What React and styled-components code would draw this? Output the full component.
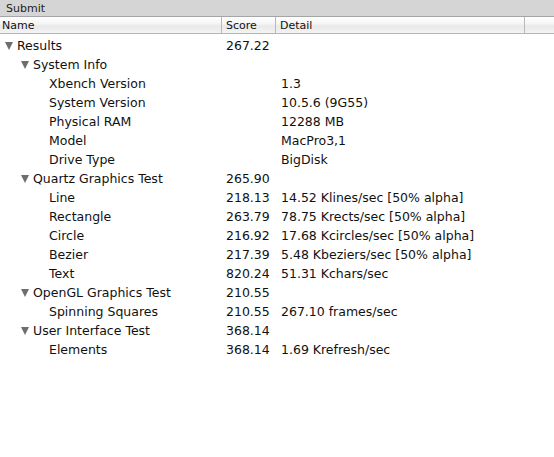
import styled, { createGlobalStyle } from "styled-components";

const GlobalStyle = createGlobalStyle`
    html, body {
        margin: 0;
        padding: 0;
        background: #fff;
    }
    body {
        font-family: "DejaVu Sans", "Liberation Sans", sans-serif;
    }
`

const Window = styled.div`
    width: 554px;
    height: 457px;
    background: #fff;
    overflow: hidden;
`

const TopBar = styled.div`
    height: 16px;
    background: #d5d5d5;
    border-bottom: 1px solid #a5a5a5;
    font-size: 11px;
    color: #222;
    padding-left: 6px;
    display: flex;
    align-items: center;
`

const HeaderRow = styled.div`
    display: grid;
    grid-template-columns: 222px 54px 249px 1fr;
    height: 16px;
    background: linear-gradient(#ffffff 0%, #f4f4f4 45%, #e9e9e9 55%, #f3f3f3 100%);
    border-bottom: 1px solid #b4b4b4;
`

const HeaderCell = styled.div`
    font-size: 11px;
    color: #111;
    padding-left: ${({ pad }) => pad}px;
    display: flex;
    align-items: center;
    border-right: ${({ last }) => (last ? "none" : "1px solid #b9b9b9")};
`

const Body = styled.div`
    padding-top: 2px;
`

const Row = styled.div`
    display: grid;
    grid-template-columns: 222px 54px 1fr;
    height: 19px;
    align-items: center;
    font-size: 12.5px;
    color: #111;
`

const NameCell = styled.div`
    display: flex;
    align-items: center;
    padding-left: ${({ level, open }) => (open ? 5 + level * 16 : 17 + level * 16)}px;
    white-space: nowrap;
`

const Triangle = styled.span`
    width: 0;
    height: 0;
    border-left: 4px solid transparent;
    border-right: 4px solid transparent;
    border-top: 8px solid #6e6e6e;
    margin-right: 4px;
    margin-top: 1px;
`

const ScoreCell = styled.div`
    padding-left: 4px;
`

const DetailCell = styled.div`
    padding-left: 5px;
    white-space: nowrap;
`

const rows = [
    { name: "Results", level: 0, open: true, score: "267.22" },
    { name: "System Info", level: 1, open: true },
    { name: "Xbench Version", level: 2, detail: "1.3" },
    { name: "System Version", level: 2, detail: "10.5.6 (9G55)" },
    { name: "Physical RAM", level: 2, detail: "12288 MB" },
    { name: "Model", level: 2, detail: "MacPro3,1" },
    { name: "Drive Type", level: 2, detail: "BigDisk" },
    { name: "Quartz Graphics Test", level: 1, open: true, score: "265.90" },
    { name: "Line", level: 2, score: "218.13", detail: "14.52 Klines/sec [50% alpha]" },
    { name: "Rectangle", level: 2, score: "263.79", detail: "78.75 Krects/sec [50% alpha]" },
    { name: "Circle", level: 2, score: "216.92", detail: "17.68 Kcircles/sec [50% alpha]" },
    { name: "Bezier", level: 2, score: "217.39", detail: "5.48 Kbeziers/sec [50% alpha]" },
    { name: "Text", level: 2, score: "820.24", detail: "51.31 Kchars/sec" },
    { name: "OpenGL Graphics Test", level: 1, open: true, score: "210.55" },
    { name: "Spinning Squares", level: 2, score: "210.55", detail: "267.10 frames/sec" },
    { name: "User Interface Test", level: 1, open: true, score: "368.14" },
    { name: "Elements", level: 2, score: "368.14", detail: "1.69 Krefresh/sec" },
]

export default function App() {
    return (
        <Window>
            <GlobalStyle />
            <TopBar>Submit</TopBar>
            <HeaderRow>
                <HeaderCell pad={2}>Name</HeaderCell>
                <HeaderCell pad={4}>Score</HeaderCell>
                <HeaderCell pad={4}>Detail</HeaderCell>
                <HeaderCell last />
            </HeaderRow>
            <Body>
                {rows.map((r) => (
                    <Row key={r.name}>
                        <NameCell level={r.level} open={r.open}>
                            {r.open && <Triangle />}
                            {r.name}
                        </NameCell>
                        <ScoreCell>{r.score}</ScoreCell>
                        <DetailCell>{r.detail}</DetailCell>
                    </Row>
                ))}
            </Body>
        </Window>
    )
}
